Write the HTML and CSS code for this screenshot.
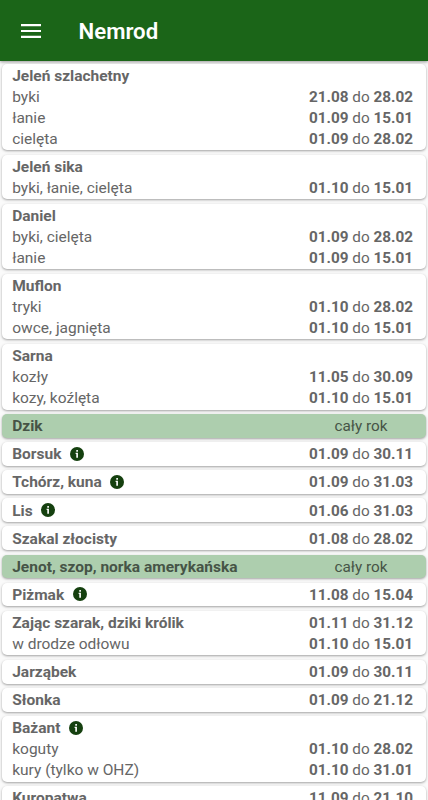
FILE: index.html
```
<!DOCTYPE html>
<html lang="pl">
<head>
    <meta charset="UTF-8">
    <meta name="viewport" content="width=device-width, initial-scale=1.0">
    <title>Nemrod</title>
    <link rel="stylesheet" href="styles.css">
</head>
<body>
    <header class="toolbar">
        <button class="menu-btn" aria-label="Menu">
            <svg width="20" height="14" viewBox="0 0 20 14"><path d="M0 1.2h20M0 7h20M0 12.8h20" stroke="#fff" stroke-width="2.2"/></svg>
        </button>
        <h1>Nemrod</h1>
    </header>

    <main class="list" id="list"></main>

    <script>
        const ALL_YEAR = 'cały rok';

        // rows: [label, from, to]
        const animals = [
            { name: 'Jeleń szlachetny', rows: [['byki', '21.08', '28.02'], ['łanie', '01.09', '15.01'], ['cielęta', '01.09', '28.02']] },
            { name: 'Jeleń sika', rows: [['byki, łanie, cielęta', '01.10', '15.01']] },
            { name: 'Daniel', rows: [['byki, cielęta', '01.09', '28.02'], ['łanie', '01.09', '15.01']] },
            { name: 'Muflon', rows: [['tryki', '01.10', '28.02'], ['owce, jagnięta', '01.10', '15.01']] },
            { name: 'Sarna', rows: [['kozły', '11.05', '30.09'], ['kozy, koźlęta', '01.10', '15.01']] },
            { name: 'Dzik', allYear: true },
            { name: 'Borsuk', info: true, season: ['01.09', '30.11'] },
            { name: 'Tchórz, kuna', info: true, season: ['01.09', '31.03'] },
            { name: 'Lis', info: true, season: ['01.06', '31.03'] },
            { name: 'Szakal złocisty', season: ['01.08', '28.02'] },
            { name: 'Jenot, szop, norka amerykańska', allYear: true },
            { name: 'Piżmak', info: true, season: ['11.08', '15.04'] },
            { name: 'Zając szarak, dziki królik', season: ['01.11', '31.12'], rows: [['w drodze odłowu', '01.10', '15.01']] },
            { name: 'Jarząbek', season: ['01.09', '30.11'] },
            { name: 'Słonka', season: ['01.09', '21.12'] },
            { name: 'Bażant', info: true, rows: [['koguty', '01.10', '28.02'], ['kury (tylko w OHZ)', '01.10', '31.01']] },
            { name: 'Kuropatwa', season: ['11.09', '21.10'] }
        ];

        const infoIcon = '<svg class="info" viewBox="0 0 24 24"><circle cx="12" cy="12" r="12"/><path d="M10.8 5.2h2.8v2.8h-2.8zM9.6 10h4v8.6h-2.8v-6.8H9.6z"/></svg>';

        function dates(from, to) {
            return `<span class="dates"><b>${from}</b> do <b>${to}</b></span>`;
        }

        function card(animal) {
            let season = '';
            if (animal.allYear) {
                season = `<span class="dates">${ALL_YEAR}</span>`;
            } else if (animal.season) {
                season = dates(...animal.season);
            }

            const rows = (animal.rows || [])
                .map(([label, from, to]) => `<div class="row"><span>${label}</span>${dates(from, to)}</div>`)
                .join('');

            return `<section class="card${animal.allYear ? ' active' : ''}">
                <div class="row"><h2>${animal.name}${animal.info ? infoIcon : ''}</h2>${season}</div>
                ${rows}
            </section>`;
        }

        document.getElementById('list').innerHTML = animals.map(card).join('');
    </script>
</body>
</html>
```
FILE: styles.css
```
* {
    box-sizing: border-box;
}

body {
    margin: 0;
    height: 100vh;
    overflow: hidden;
    display: flex;
    flex-direction: column;
    font-family: Roboto, sans-serif;
    font-size: 15.5px;
    line-height: 21px;
    color: #666;
    background-color: #fafafa;
}

.toolbar {
    flex: none;
    display: flex;
    align-items: center;
    height: 61px;
    padding: 0 21px;
    background-color: #1b6518;
    box-shadow: 0 1px 3px rgba(0, 0, 0, 0.4);
}

.toolbar h1 {
    margin: 2px 0 0 37.5px;
    font-size: 22.2px;
    font-weight: 600;
    color: #fff;
}

.menu-btn {
    display: flex;
    padding: 0;
    border: none;
    background: none;
    cursor: pointer;
}

.list {
    flex: 1;
    display: flex;
    flex-direction: column;
    gap: 4.54px;
    padding: 2.5px 2px 0;
    overflow: hidden;
}

.card {
    flex: none;
    padding: 2.2px 12.5px 0.4px 10.2px;
    border-radius: 5px;
    background-color: #fff;
    box-shadow: 0 1px 2.5px rgba(0, 0, 0, 0.36);
}

.card.active {
    background-color: #adceae;
    color: #465446;
}

.row {
    display: flex;
    justify-content: space-between;
    height: 21px;
}

.row h2 {
    display: flex;
    align-items: center;
    margin: 0;
    font-size: inherit;
    font-weight: 700;
}

.dates {
    width: 105px;
    font-size: 15.3px;
    text-align: center;
    white-space: nowrap;
}

.info {
    width: 14px;
    height: 14px;
    margin: -2px 0 0 8.5px;
}

.info circle {
    fill: #15400f;
}

.info path {
    fill: #fff;
}
```
